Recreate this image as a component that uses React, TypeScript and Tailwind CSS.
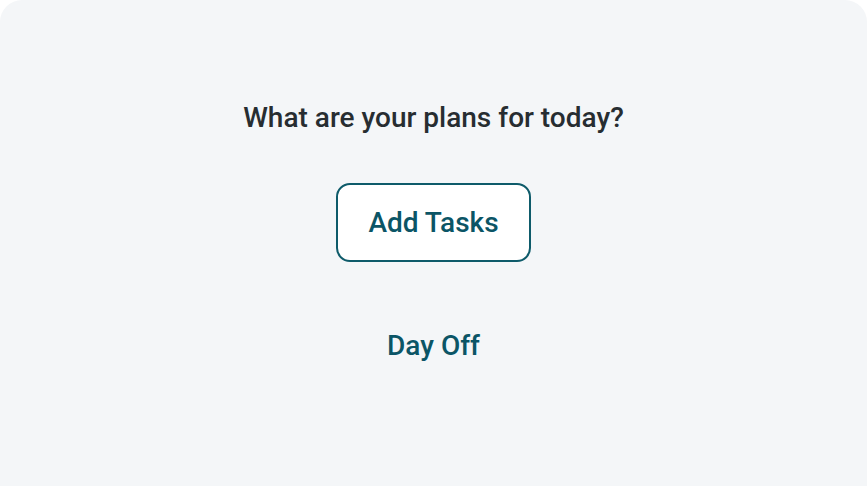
import React from "react";

const App = () => {
  return (
    <div className="w-[867px] h-[486px] bg-white" style={{ fontFamily: "Roboto, 'Noto Sans', sans-serif" }}>
      <div className="w-full h-full bg-[#f4f6f8] rounded-t-[22px] flex flex-col items-center pt-[101px]">
        <h1 className="text-[28px] leading-[34px] font-medium text-[#272d31]">
          What are your plans for today?
        </h1>
        <button
          type="button"
          className="mt-[48px] w-[195px] h-[79px] rounded-[14px] border-2 border-[#0e5b6a] bg-white text-[28px] font-medium text-[#0b5566]"
        >
          Add Tasks
        </button>
        <button
          type="button"
          className="mt-[64px] text-[28px] leading-[40px] font-medium text-[#0b5566]"
        >
          Day Off
        </button>
      </div>
    </div>
  );
};

export default App;
